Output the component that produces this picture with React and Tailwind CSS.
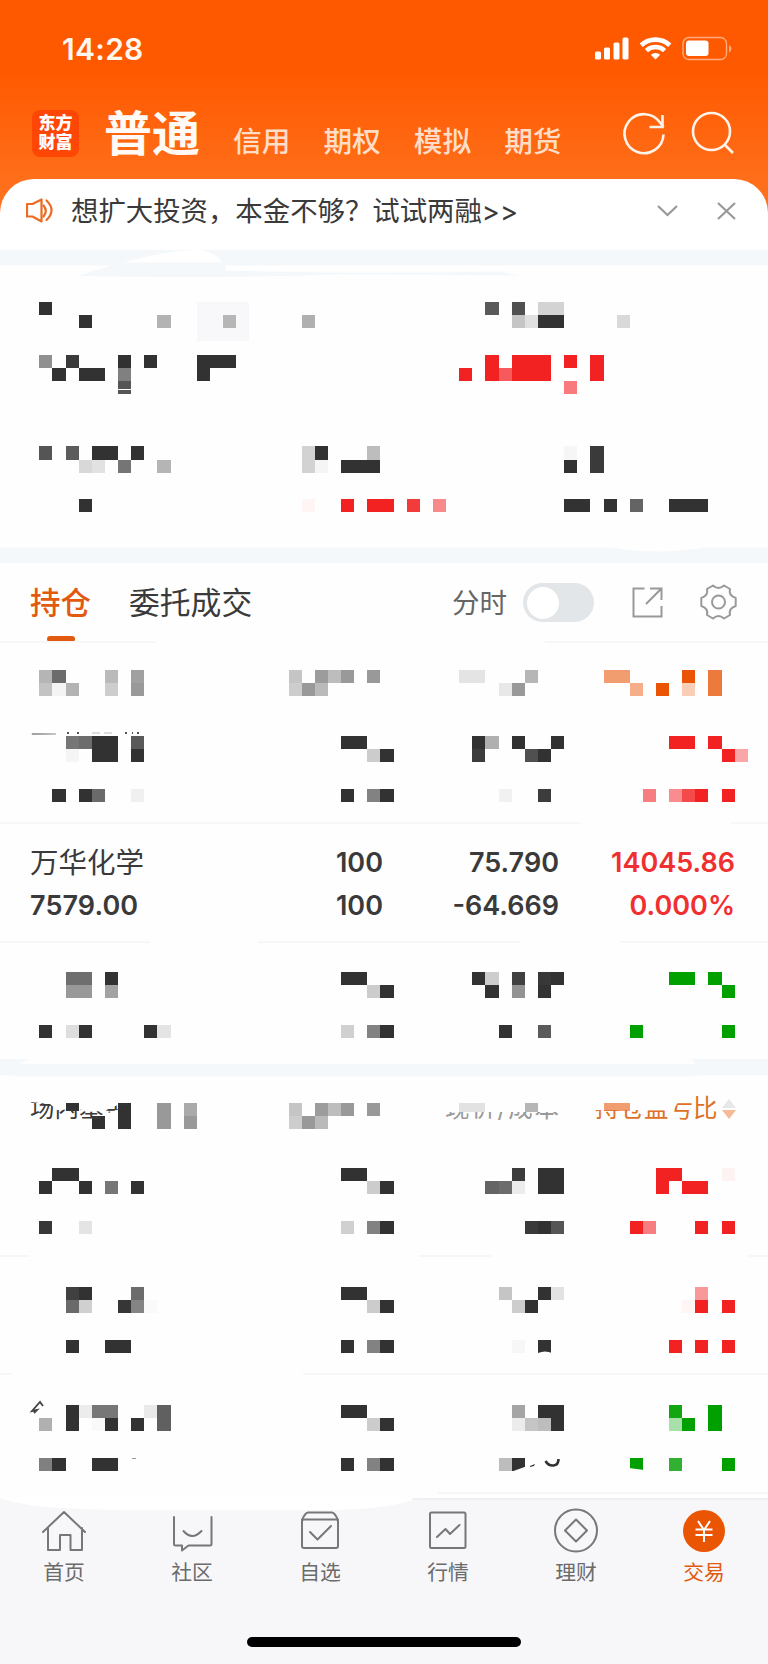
import React, { useState } from "react";
import clsx from "clsx";

const K = "#323232";
const R = "#f22222";
const G = "#00a000";
const O = "#e95504";

const CELL_X = 13.12;
const CELL_Y = 13.13;

// cells: [row, col, width, height, color], counted in mosaic blocks
const SUMMARY = [
  [0, 15, 4, 3, "#f8f8fb"],
  [0, 3, 1, 1, K],
  [0, 37, 1, 1, "#5a5a5a"],
  [0, 39, 1, 1, "#505050"],
  [0, 41, 2, 1, "#d3d3d3"],
  [1, 6, 1, 1, K],
  [1, 12, 1, 1, "#b3b3b3"],
  [1, 17, 1, 1, "#b6b6b6"],
  [1, 23, 1, 1, "#b0b0b0"],
  [1, 39, 1, 1, "#c5c5c5"],
  [1, 40, 1, 1, "#e0e0e0"],
  [1, 41, 2, 1, K],
  [1, 47, 1, 1, "#d9d9d9"],
  [4, 3, 1, 1, "#909090"],
  [4, 5, 1, 1, "#3a3a3a"],
  [4, 9, 1, 1, K],
  [4, 11, 1, 1, K],
  [4, 15, 3, 1, K],
  [4, 37, 1, 2, R],
  [4, 39, 3, 2, R],
  [4, 43, 1, 1, R],
  [4, 45, 1, 2, R],
  [5, 4, 1, 1, K],
  [5, 6, 2, 1, K],
  [5, 9, 1, 1, "#808080"],
  [5, 15, 1, 1, K],
  [5, 35, 1, 1, R],
  [5, 38, 1, 1, "#f75a5c"],
  [6, 9, 1, 0.6, "#555555"],
  [6.7, 9, 1, 0.3, "#555555"],
  [6, 43, 1, 1, "#f87a7c"],
  [11, 3, 1, 1, "#555555"],
  [11, 5, 1, 1, "#5c5c5c"],
  [11, 7, 2, 1, K],
  [11, 10, 1, 1, K],
  [11, 23, 1, 2, "#d2d2d2"],
  [11, 24, 1, 1, K],
  [11, 28, 1, 1, "#bdbdbd"],
  [11, 43, 1, 1, "#f6f6f6"],
  [11, 45, 1, 2, "#3a3a3a"],
  [12, 6, 1, 1, "#d8d8d8"],
  [12, 7, 1, 1, "#e2e2e2"],
  [12, 9, 1, 1, "#757575"],
  [12, 12, 1, 1, "#b5b5b5"],
  [12, 24, 1, 1, "#f5f5f5"],
  [12, 26, 3, 1, K],
  [12, 43, 1, 1, K],
  [15, 6, 1, 1, K],
  [15, 23, 1, 1, "#fff5f5"],
  [15, 26, 1, 1, R],
  [15, 28, 2, 1, R],
  [15, 31, 1, 1, "#f23b3b"],
  [15, 33, 1, 1, "#f88a8c"],
  [15, 43, 2, 1, K],
  [15, 46, 1, 1, K],
  [15, 48, 1, 1, "#646464"],
  [15, 51, 3, 1, K],
];

const COLUMNS = [
  [0, 3, 1, 1, "#b5b5b5"],
  [0, 4, 1, 1, "#6c6c6c"],
  [0, 8, 1, 1, "#bababa"],
  [0, 10, 1, 1, "#a0a0a0"],
  [0, 22, 1, 1, "#c5c5c5"],
  [0, 24, 1, 1, "#9c9c9c"],
  [0, 25, 1, 1, "#bdbdbd"],
  [0, 26, 1, 1, "#999999"],
  [0, 28, 1, 1, "#999999"],
  [0, 35, 2, 1, "#e4e4e4"],
  [0, 40, 1, 1, "#b6b6b6"],
  [0, 46, 2, 1, "#f19d70"],
  [0, 52, 1, 1, O],
  [0, 54, 1, 2, "#ec7a3c"],
  [1, 3, 1, 1, "#c3c3c3"],
  [1, 4, 1, 1, "#f4f4f4"],
  [1, 5, 1, 1, "#b3b3b3"],
  [1, 8, 1, 1, "#cdcdcd"],
  [1, 10, 1, 1, "#999999"],
  [1, 22, 1, 1, "#cdcdcd"],
  [1, 23, 1, 1, "#999999"],
  [1, 24, 1, 1, "#bababa"],
  [1, 38, 1, 1, "#e8e8e8"],
  [1, 39, 1, 1, "#999999"],
  [1, 48, 1, 1, "#f5ae88"],
  [1, 50, 1, 1, O],
  [1, 52, 1, 1, "#f8ceb6"],
];

const FUND_COLUMNS = [
  [0, 5, 1, 0.6, K],
  [0, 9, 1, 2, K],
  [0, 12, 1, 2, "#999999"],
  [0, 14, 1, 1, "#aaaaaa"],
  [0, 22, 1, 1, "#c5c5c5"],
  [0, 24, 1, 1, "#9c9c9c"],
  [0, 25, 1, 1, "#bdbdbd"],
  [0, 26, 1, 1, "#999999"],
  [0, 28, 1, 1, "#999999"],
  [0, 35, 2, 0.7, "#e2e2e2"],
  [0, 40, 1, 0.7, "#b6b6b6"],
  [0, 46, 2, 0.6, "#f19d70"],
  [1, 7, 1, 1, K],
  [1, 14, 1, 1, "#999999"],
  [1, 22, 1, 1, "#cdcdcd"],
  [1, 23, 1, 1, "#999999"],
  [1, 24, 1, 1, "#bababa"],
];

// the quantity column looks the same in every masked row
const quantity = (first) => [
  [0, 26, 2, 1, K],
  [1, 28, 1, 1, "#cccccc"],
  [1, 29, 1, 1, K],
  [4, 26, 1, 1, first],
  [4, 28, 1, 1, "#828282"],
  [4, 29, 1, 1, K],
];

const STOCK_A = [
  ...quantity(K),
  [0, 5, 1, 1, "#767676"],
  [0, 6, 1, 1, "#6c6c6c"],
  [0, 7, 2, 2, K],
  [0, 10, 1, 1, "#5a5a5a"],
  [0, 36, 1, 1, K],
  [0, 37, 1, 1, "#b0b0b0"],
  [0, 39, 1, 1, K],
  [0, 42, 1, 1, K],
  [0, 51, 2, 1, R],
  [0, 54, 1, 1, R],
  [1, 5, 1, 1, "#f5f5f5"],
  [1, 10, 1, 1, K],
  [1, 36, 1, 1, "#3c3c3c"],
  [1, 40, 1, 1, "#505050"],
  [1, 41, 1, 1, K],
  [1, 55, 1, 1, R],
  [1, 56, 1, 1, "#f9a6a8"],
  [4, 4, 1, 1, K],
  [4, 6, 1, 1, K],
  [4, 7, 1, 1, "#6a6a6a"],
  [4, 10, 1, 1, "#f0f0f0"],
  [4, 38, 1, 1, "#f1f1f1"],
  [4, 41, 1, 1, "#3c3c3c"],
  [4, 49, 1, 1, "#f67e80"],
  [4, 51, 1, 1, "#f88c8e"],
  [4, 52, 1, 1, "#f54a4c"],
  [4, 53, 1, 1, R],
  [4, 55, 1, 1, R],
];

const STOCK_B = [
  ...quantity("#d0d0d0"),
  [0, 5, 2, 1, "#6e6e6e"],
  [0, 8, 1, 1, K],
  [0, 36, 1, 1, K],
  [0, 37, 1, 1, "#cdcdcd"],
  [0, 39, 1, 1, "#404040"],
  [0, 41, 1, 1, "#383838"],
  [0, 42, 1, 1, K],
  [0, 51, 2, 1, G],
  [0, 54, 1, 1, G],
  [1, 5, 2, 1, "#999999"],
  [1, 8, 1, 1, "#a2a2a2"],
  [1, 37, 1, 1, K],
  [1, 39, 1, 1, "#939393"],
  [1, 41, 1, 1, K],
  [1, 55, 1, 1, G],
  [4, 3, 1, 1, K],
  [4, 5, 1, 1, "#dedede"],
  [4, 6, 1, 1, K],
  [4, 11, 1, 1, K],
  [4, 12, 1, 1, "#e4e4e4"],
  [4, 38, 1, 1, K],
  [4, 41, 1, 1, "#5a5a5a"],
  [4, 48, 1, 1, G],
  [4, 55, 1, 1, G],
];

const FUND_A = [
  ...quantity("#d0d0d0"),
  [0, 4, 2, 1, K],
  [0, 39, 1, 1, "#3c3c3c"],
  [0, 41, 2, 2, K],
  [0, 50, 2, 1, R],
  [0, 55, 1, 1, "#fef3f3"],
  [1, 3, 1, 1, K],
  [1, 6, 1, 1, K],
  [1, 8, 1, 1, "#767676"],
  [1, 10, 1, 1, K],
  [1, 37, 1, 1, "#646464"],
  [1, 38, 1, 1, "#6c6c6c"],
  [1, 39, 1, 1, "#ececec"],
  [1, 50, 1, 1, R],
  [1, 52, 2, 1, R],
  [4, 3, 1, 1, "#383838"],
  [4, 6, 1, 1, "#e4e4e4"],
  [4, 40, 1, 1, "#3a3a3a"],
  [4, 41, 1, 1, K],
  [4, 42, 1, 1, "#555555"],
  [4, 48, 1, 1, R],
  [4, 49, 1, 1, "#f67e80"],
  [4, 53, 1, 1, R],
  [4, 55, 1, 1, R],
];

const FUND_B = [
  ...quantity(K),
  [0, 5, 1, 1, "#404040"],
  [0, 6, 1, 1, K],
  [0, 10, 1, 1, "#6c6c6c"],
  [0, 38, 1, 1, "#c5c5c5"],
  [0, 41, 1, 1, K],
  [0, 42, 1, 1, "#e2e2e2"],
  [0, 53, 1, 1, "#f8989a"],
  [1, 5, 1, 1, "#6a6a6a"],
  [1, 6, 1, 1, "#d0d0d0"],
  [1, 9, 1, 1, "#363636"],
  [1, 10, 1, 1, "#848484"],
  [1, 11, 1, 1, "#fafafa"],
  [1, 39, 1, 1, "#cdcdcd"],
  [1, 40, 1, 1, K],
  [1, 52, 1, 1, "#fef5f5"],
  [1, 53, 1, 1, R],
  [1, 55, 1, 1, R],
  [4, 5, 1, 1, K],
  [4, 8, 2, 1, K],
  [4, 39, 1, 1, "#f7f7f7"],
  [4, 41, 1, 1, K],
  [4, 51, 1, 1, R],
  [4, 53, 1, 1, R],
  [4, 55, 1, 1, R],
];

const FUND_C = [
  ...quantity(K),
  [0, 5, 1, 2, K],
  [0, 6, 1, 1, "#ececec"],
  [0, 7, 2, 1, "#777777"],
  [0, 11, 1, 1, "#eaeaea"],
  [0, 12, 1, 2, "#606060"],
  [0, 39, 1, 1, "#a5a5a5"],
  [0, 41, 1, 1, K],
  [0, 42, 1, 2, K],
  [0, 51, 1, 1, "#12a612"],
  [0, 54, 1, 2, G],
  [1, 3, 1, 1, "#b0b0b0"],
  [1, 7, 1, 1, "#f9f9f9"],
  [1, 8, 1, 1, K],
  [1, 10, 1, 1, K],
  [1, 39, 1, 1, "#ececec"],
  [1, 40, 1, 1, "#c5c5c5"],
  [1, 41, 1, 1, "#bdbdbd"],
  [1, 51, 1, 1, "#a9dfaa"],
  [1, 52, 1, 1, G],
  [4, 3, 1, 1, "#808080"],
  [4, 4, 1, 1, K],
  [4, 7, 2, 1, K],
  [4, 38, 1, 1, "#bdbdbd"],
  [4, 39, 1, 1, K],
  [4, 48, 1, 1, G],
  [4, 51, 1, 1, "#32b032"],
  [4, 55, 1, 1, G],
];

const Mosaic = ({ cells, rows, children }) => {
  const px = (col) => Math.round(col * CELL_X);
  const py = (row) => Math.round(row * CELL_Y);
  return (
    <svg
      width="768"
      height={py(rows)}
      className="block shrink-0 overflow-visible"
    >
      {cells.map(([row, col, w, h, fill], i) => (
        <rect
          key={i}
          x={px(col)}
          y={py(row)}
          width={px(col + w) - px(col)}
          height={py(row + h) - py(row)}
          fill={fill}
        />
      ))}
      {children}
    </svg>
  );
};

// hairline that is wiped out in places; parts are [from, to]
const Divider = ({ parts }) => (
  <svg width="768" height="2" className="block shrink-0">
    {parts.map(([from, to]) => (
      <rect key={from} x={from} y="0" width={to - from} height="2" fill="#f7f7f8" />
    ))}
  </svg>
);

const StatusBar = () => (
  <div className="h-[96px] flex justify-between pl-[62px] pr-[36px]">
    <span className="pt-[31px] text-[30px] leading-[36px] font-semibold tracking-[0.3px] text-[#fff6f0]">
      14:28
    </span>
    <svg width="138" height="26" viewBox="594 36 138 26" className="mt-[36px]">
      <g fill="#fff">
        <rect x="595" y="51.5" width="6" height="8" rx="1.5" />
        <rect x="604" y="47.5" width="6" height="12" rx="1.5" />
        <rect x="613.5" y="42.5" width="6" height="17" rx="1.5" />
        <rect x="622.5" y="37.5" width="6" height="22" rx="1.5" />
        <rect x="686" y="40.5" width="22.5" height="15.5" rx="3" />
      </g>
      <g fill="none" stroke="#fff" strokeWidth="4.6">
        <path d="M641.2 45.2a21 21 0 0 1 28.6 0" />
        <path d="M646.4 50.6a13.4 13.4 0 0 1 18.2 0" />
      </g>
      <path d="M650.8 54.8a7 7 0 0 1 9.4 0l-4.7 4.8z" fill="#fff" />
      <rect x="683" y="37.5" width="43.5" height="22" rx="6" fill="none" stroke="#ffab80" strokeWidth="1.4" />
      <path d="M729 45v7.500q2.500-1.200 2.500-3.700t-2.500-3.800z" fill="#ffab80" />
    </svg>
  </div>
);

const TopNav = () => (
  <div className="h-[83px] flex items-start">
    <div className="ml-[32px] mt-[14px] w-[47px] h-[47px] rounded-[8px] bg-[#ff4705] text-white font-black text-[17px] leading-[19px] pt-[4px] text-center">
      东方
      <br />
      财富
    </div>
    <span className="ml-[25px] mt-[3px] text-[48px] leading-[70px] font-bold text-[#fffaf5]">
      普通
    </span>
    <div className="ml-[33px] mt-[25px] flex gap-[33px] text-[28.700px] leading-[42px] font-medium text-[#ffddc7]">
      <span>信用</span>
      <span>期权</span>
      <span>模拟</span>
      <span>期货</span>
    </div>
    <svg
      width="116"
      height="48"
      viewBox="620 110 116 48"
      className="ml-auto mr-[32px] mt-[14px]"
      fill="none"
      stroke="#fff3ea"
      strokeWidth="2.6"
    >
      <path d="M663.500 134.500a19.500 19.500 0 1 1-3.500-12l3.500 4.500" />
      <path d="M662.500 115v12h-13" />
      <circle cx="711.500" cy="131.500" r="18.500" />
      <path d="M724.500 144.500l8.500 8.500" />
    </svg>
  </div>
);

const Notice = () => (
  <div className="h-[71px] bg-white rounded-t-[34px] flex items-start text-[#3a3a3a]">
    <svg
      width="28"
      height="26"
      viewBox="0 0 28 26"
      className="ml-[26px] mt-[19px]"
      fill="none"
      stroke="#ec6a22"
      strokeWidth="2.2"
    >
      <path d="M1 6h5.500l9-4.500v22l-9-5H1z" strokeLinejoin="round" />
      <path d="M17.500 7.500q4.500 5 0 11M20.500 2.500q10 9.500 0 19.500" strokeLinecap="round" />
    </svg>
    <span className="ml-[17px] mt-[12px] text-[27.400px] leading-[41px] whitespace-nowrap">
      想扩大投资，本金不够？试试两融&gt;&gt;
    </span>
    <svg
      width="80"
      height="20"
      viewBox="0 0 80 20"
      className="ml-auto mr-[32px] mt-[22px]"
      fill="none"
      stroke="#999"
      strokeWidth="2.2"
    >
      <path d="M2 5l9.500 9 9.500-9M62 2l17 16M79 2L62 18" />
    </svg>
  </div>
);

const Toolbar = () => {
  const [live, setLive] = useState(false);
  return (
    <div className="h-[78px] shrink-0 flex items-start">
      <div className="ml-[30px] mt-[18px] h-[61px] flex flex-col items-center">
        <span className="text-[30.500px] leading-[44px] font-medium text-[#e25a10]">
          持仓
        </span>
        <span className="mt-auto w-[28px] h-[6px] rounded-[3px] bg-[#e25a10]" />
      </div>
      <span className="ml-[38px] mt-[18px] text-[30.800px] leading-[44px] text-[#3a3a3a]">
        委托成交
      </span>
      <span className="ml-auto mt-[19px] text-[27.500px] leading-[42px] text-[#666]">
        分时
      </span>
      <button
        onClick={() => setLive(!live)}
        className={clsx(
          "ml-[16px] mt-[20px] w-[71px] h-[39px] rounded-full px-[4px] flex items-center",
          live ? "bg-[#e25a10] justify-end" : "bg-[#e2e6e8]"
        )}
      >
        <span className="w-[32px] h-[32px] rounded-full bg-white" />
      </button>
      <svg
        width="31"
        height="31"
        viewBox="0 0 31 31"
        className="ml-[38px] mt-[24px]"
        fill="none"
        stroke="#999"
        strokeWidth="2"
      >
        <path d="M12.500 1.500H1.500v28H29.500V19M18 1.500h11.500V13M29 2L14 17" />
      </svg>
      <svg
        width="37"
        height="36"
        viewBox="-18.500 -18 37 36"
        className="ml-[37px] mr-[31px] mt-[21px]"
        fill="none"
        stroke="#999"
        strokeWidth="2"
        strokeLinejoin="round"
      >
        <path d="M-5.500-16.500Q0-11.500 5.500-16.500L11.500-13Q9.800-6.500 17.200-4V4Q9.800 6.500 11.500 13L5.500 16.500Q0 11.500-5.500 16.500L-11.500 13Q-9.800 6.500-17.200 4V-4Q-9.800-6.500-11.500-13Z" />
        <circle r="6.500" />
      </svg>
    </div>
  );
};

const MaskedRow = ({ cells, children }) => (
  <div className="h-[116.300px] shrink-0 pt-[29.500px]">
    <Mosaic cells={cells} rows={5}>
      {children}
    </Mosaic>
  </div>
);

const StockRow = () => (
  <div className="h-[116.300px] shrink-0 pt-[18px] pl-[30px] pr-[33px] flex text-[27px] leading-[42.600px] font-semibold text-[#3a3a3a]">
    <div className="w-[183px]">
      <div className="text-[28.500px] font-normal">万华化学</div>
      <div className="tracking-[0.1px]">7579.00</div>
    </div>
    <div className="w-[170px] text-right">
      <div>100</div>
      <div>100</div>
    </div>
    <div className="w-[176px] text-right">
      <div>75.790</div>
      <div>-64.669</div>
    </div>
    <div className="w-[176px] text-right text-[#f03030]">
      <div>14045.86</div>
      <div>0.000%</div>
    </div>
  </div>
);

const FundHeader = () => (
  <div className="relative h-[62px] shrink-0 pt-[26px]">
    <Mosaic cells={FUND_COLUMNS} rows={2} />
    <div className="absolute inset-0 text-[24.500px] leading-[36px] whitespace-nowrap">
      <span className="absolute left-[30px] top-[13px] text-[#3a3a3a] [clip-path:polygon(0_12px,20px_14px,27px_20px,50px_19px,56px_22px,74px_21px,90px_14px,100px_15px,100px_17px,86px_20px,76px_24px,74px_30px,0_30px)]">
        场内基金
      </span>
      <span className="absolute left-[445px] top-[13px] text-[#999] tracking-[1.800px] [clip-path:inset(22px_0_0_0)]">
        现价/成本
      </span>
      <span className="absolute left-[595px] top-[13px] text-[#df7025] [clip-path:polygon(0_20px,78px_20px,84px_11px,96px_10px,98px_0,124px_0,124px_36px,0_36px)]">
        持仓盈亏比
      </span>
      <svg width="14" height="22" className="absolute left-[722px] top-[21px]">
        <path d="M0 10L7 1l7 9z" fill="#e8e8ea" />
        <path d="M0 12h14l-7 9z" fill="#f6ba98" />
      </svg>
    </div>
  </div>
);

const icons = {
  home: <path d="M1 22L22 2l21 20M6 18v22h12V25h10.500v15H40V18" />,
  community: (
    <>
      <path d="M4 7v27q0 1.500 1.500 1.500H12v5l6.500-5H40q1.500 0 1.500-1.500V7" />
      <path d="M13.500 21q8.500 10 18 0" />
    </>
  ),
  watch: (
    <>
      <rect x="4" y="9.500" width="36" height="28.500" rx="2" />
      <path d="M4 10q3-7 6-7.500h24q3 .5 6 7.500M12 22l7.500 7.500L33 16" />
    </>
  ),
  market: (
    <>
      <rect x="4" y="2.500" width="35.500" height="35.500" rx="1.500" />
      <path d="M11 27l8.500-8 4.500 5 9.500-9" />
    </>
  ),
  wealth: (
    <>
      <circle cx="22" cy="20.500" r="21" />
      <path d="M22 9.500l11 11-11 11-11-11z" />
    </>
  ),
};

const TABS = [
  { id: "home", label: "首页" },
  { id: "community", label: "社区" },
  { id: "watch", label: "自选" },
  { id: "market", label: "行情" },
  { id: "wealth", label: "理财" },
  { id: "trade", label: "交易" },
];

const TabBar = () => (
  <div className="relative h-[166px] shrink-0 bg-[#f7f7fa] flex flex-col">
    <svg width="768" height="16" className="absolute left-0 top-0">
      <path d="M0 0q30 12 135 12h190q60 0 90-11L420 0z" fill="#fff" />
      <path d="M412 1h356" stroke="#ececef" strokeWidth="1.500" />
    </svg>
    <div className="relative flex pt-[12px]">
      {TABS.map((tab) => (
        <div
          key={tab.id}
          className={clsx(
            "w-[128px] flex flex-col items-center text-[20.800px] leading-[30px]",
            tab.id === "trade" ? "text-[#e25a10]" : "text-[#6b6b6b]"
          )}
        >
          {tab.id === "trade" ? (
            <svg width="44" height="44" viewBox="0 0 44 44" fill="none">
              <circle cx="22" cy="21" r="21" fill="#ea5504" />
              <path
                d="M16 11l6 9 6-9M13.500 19.500h17M13.500 25h17M22 19v13"
                stroke="#fff"
                strokeWidth="2"
              />
            </svg>
          ) : (
            <svg
              width="44"
              height="44"
              viewBox="0 0 44 44"
              fill="none"
              stroke="#777"
              strokeWidth="2"
              strokeLinejoin="round"
              strokeLinecap="round"
              className="overflow-visible"
            >
              {icons[tab.id]}
            </svg>
          )}
          <span className="mt-[4px]">{tab.label}</span>
        </div>
      ))}
    </div>
    <div className="mt-auto mb-[17px] mx-auto w-[274px] h-[10px] rounded-full bg-black" />
  </div>
);

const App = () => {
  return (
    <div className="w-[768px] h-[1664px] overflow-hidden flex flex-col bg-[#fefefe] font-[Inter,'Noto_Sans_CJK_SC',sans-serif]">
      {/* Header */}
      <div className="h-[250px] shrink-0 bg-[linear-gradient(#ff5900_0px,#ff5900_70px,#ff6e1a_180px,#ff7420_215px)]">
        <StatusBar />
        <TopNav />
        <Notice />
      </div>

      {/* Account summary */}
      <svg width="768" height="28" className="block shrink-0">
        <rect width="768" height="15.500" fill="#f4f8fa" />
        <path d="M122 13Q165 0 200 0 218 3 222 13z" fill="#fff" />
        <path d="M78 26Q100 19 122 12.500H222q4 3 4 8 150 4 273 1l20 4q-100-1-180-1-130 4-261 1.500z" fill="#f4f8fa" />
        <path d="M226 16.500h290v4H226z" fill="#fff" />
      </svg>
      <div className="h-[269px] shrink-0 pt-[24px]">
        <Mosaic cells={SUMMARY} rows={16} />
      </div>
      <svg width="768" height="16" className="block shrink-0">
        <rect y="0.500" width="768" height="15.500" fill="#f4f8fa" />
        <path d="M610 0q48 9 98 0z" fill="#fefefe" />
      </svg>

      {/* Holdings */}
      <Toolbar />
      <Divider parts={[[0, 155], [545, 768]]} />
      <div className="h-[63px] shrink-0 pt-[26.500px]">
        <Mosaic cells={COLUMNS} rows={2} />
      </div>
      <MaskedRow cells={STOCK_A}>
        <path d="M32-2.500L56-2 32-1.500z" stroke="#aaa" strokeWidth="0.800" />
        <path
          d="M67-3h2m8 0h2m46 0h2m5 0h1m4 0h2"
          stroke="#555"
          strokeWidth="2"
        />
        <path d="M92-3h8m4 0h8" stroke="#bbb" />
      </MaskedRow>
      <Divider parts={[[0, 580], [731, 768]]} />
      <StockRow />
      <Divider parts={[[0, 150], [258, 520], [619, 768]]} />
      <MaskedRow cells={STOCK_B} />
      <svg width="768" height="18" className="block shrink-0">
        <path d="M0 0h28l-8 5h676l-5-5h77v16.500h-70l-8 1H18l-4-1H0z" fill="#f4f8fa" />
      </svg>

      {/* Funds */}
      <FundHeader />
      <MaskedRow cells={FUND_A} />
      <Divider parts={[[0, 30], [419, 491], [748, 768]]} />
      <MaskedRow cells={FUND_B}>
        <path d="M538 66q7-3 14 0z" fill="#fff" />
      </MaskedRow>
      <Divider parts={[[0, 12], [303, 768]]} />
      <MaskedRow cells={FUND_C}>
        <path
          d="M43 1l-3-4-8 9 5-1-3 3"
          fill="none"
          stroke="#444"
          strokeWidth="1.800"
        />
        <path d="M132 53.500h4" stroke="#999" />
        <path d="M512 66.500l14-5v5zM629 63l15 2v2h-15z" fill="#fefefe" />
        <path d="M530 61l5-2-1 2-4 1z" fill={K} />
        <path
          d="M545.500 56q3 5 8 4.500t5-6.500"
          fill="none"
          stroke={K}
          strokeWidth="2.600"
        />
      </MaskedRow>
      <Divider parts={[[438, 768]]} />
      <div className="flex-1" />
      <TabBar />
    </div>
  );
};

export default App;
